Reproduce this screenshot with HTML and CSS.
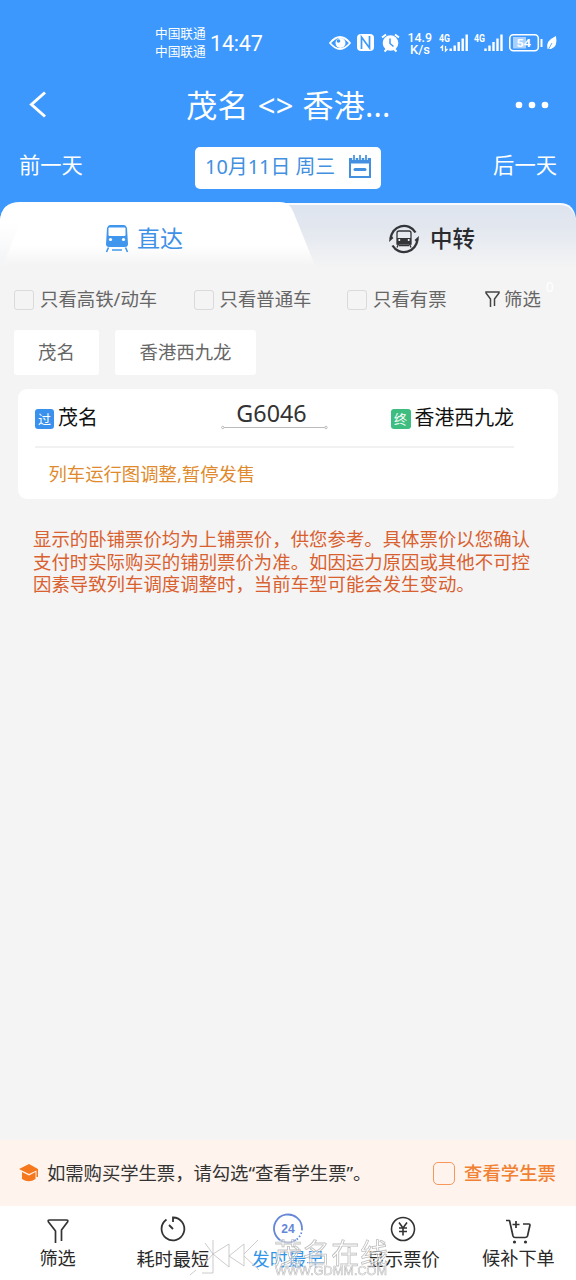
FILE: index.html
```html
<!DOCTYPE html>
<html lang="zh-CN">
<head>
<meta charset="utf-8">
<title>茂名 - 香港西九龙</title>
<link rel="stylesheet" href="styles.css">
</head>
<body>
<div class="app">
  <header class="top">
    <div class="status">
      <div class="carriers"><span>中国联通</span><span>中国联通</span></div>
      <div class="clock">14:47</div>
      <svg class="status-icons" width="232" height="32" viewBox="326 27 232 32" fill="none" stroke="#fff">
        <path d="M330 43Q340 31 350 43Q340 55 330 43Z" stroke-width="1.8"/>
        <circle cx="340.500" cy="43" r="5" fill="#fff" stroke="none"/><circle cx="338.500" cy="41" r="1.800" fill="#3c98fc" stroke="none"/>
        <rect x="357" y="34" width="17" height="17" rx="4" fill="#fff" stroke="none"/>
        <path d="M361.500 49V37L369.500 48V36" stroke="#3c98fc" stroke-width="1.700"/>
        <circle cx="390.500" cy="43" r="7.800" fill="#fff" stroke="none"/>
        <path d="M382 37.500L386 34.500M399 37.500L395 34.500M384.500 51.500L387 49M396.500 51.500L394 49" stroke-width="2"/>
        <path d="M390 38.500V43.500L393.500 46.500" stroke="#3c98fc" stroke-width="1.500"/>
        <g fill="#fff" stroke="none" class="status-text">
          <text x="407.500" y="41.500" font-size="12" font-weight="500" textLength="24.500" lengthAdjust="spacingAndGlyphs">14.9</text>
          <text x="410" y="53.500" font-size="12.500" font-weight="500" textLength="20" lengthAdjust="spacingAndGlyphs">K/s</text>
          <text x="439" y="41.500" font-size="10.500" font-weight="bold" textLength="11" lengthAdjust="spacingAndGlyphs">4G</text>
          <text x="474" y="41.500" font-size="10.500" font-weight="bold" textLength="11" lengthAdjust="spacingAndGlyphs">4G</text>
        </g>
        <path d="M442.500 51V46L440.500 48M445.500 46V51L447.500 49" stroke-width="1.300"/>
        <path d="M450.700 51V48.500M454.700 51V45.500M458.700 51V42M462.700 51V38.500M466.700 51V34.500M485.500 51V48.500M489.500 51V45.500M493.500 51V42M497.500 51V38.500M501.500 51V34.500" stroke-width="2.400"/>
        <rect x="509.800" y="34.800" width="28.500" height="16" rx="3.500" stroke-width="1.600"/>
        <rect x="513" y="37" width="13" height="11.500" fill="#a9d0fe" stroke="none"/>
        <text x="516.500" y="47" class="status-text" fill="#fff" stroke="none" font-size="11.500" font-weight="bold" textLength="14.500" lengthAdjust="spacingAndGlyphs">54</text>
        <path d="M541.500 39V47" stroke-width="2"/>
        <path d="M547.500 49Q545 41 556 36Q558 47 551 49L548 49Z" fill="#fff" stroke="none"/><path d="M547.500 51L552 43" stroke="#3c98fc" stroke-width=".8"/>
      </svg>
    </div>
    <div class="titlebar">
      <svg width="20" height="28" viewBox="0 0 20 28" fill="none" stroke="#fff" stroke-width="3"><path d="M17 1.500L3.500 13.500L17 25.500"/></svg>
      <h1 class="title">茂名 <span class="swap">&lt;&gt;</span> 香港...</h1>
      <svg width="34" height="8" viewBox="0 0 34 8" fill="#fff"><circle cx="4" cy="4" r="3.300"/><circle cx="17" cy="4" r="3.300"/><circle cx="30" cy="4" r="3.300"/></svg>
    </div>
    <div class="days">
      <span>前一天</span>
      <div class="date"><span>10月11日 周三</span>
        <svg width="24" height="26" viewBox="0 0 24 26" fill="none" stroke="#4290df"><path d="M2 5H22V23H2Z" stroke-width="2"/><path d="M1 4.500H23V9.500H1Z" fill="#4290df" stroke="none"/><path d="M6 1V6M12 1V6M18 1V6" stroke="#fff" stroke-width="3.500"/><path d="M6 1V6M12 1V6M18 1V6" stroke-width="1.700"/><path d="M7 15.500H17" stroke-width="3" stroke-linecap="round"/></svg>
      </div>
      <span class="next">后一天</span>
    </div>
  </header>
  <div class="tabs">
    <svg class="tab-shape" width="576" height="66" viewBox="0 0 576 66">
      <defs>
        <linearGradient id="gray" x1="0" y1="0" x2="0" y2="1"><stop offset="0" stop-color="#dee4ef"/><stop offset=".35" stop-color="#e2e7ef"/><stop offset="1" stop-color="#f4f4f4"/></linearGradient>
        <linearGradient id="white" x1="0" y1="0" x2="0" y2="1"><stop offset="0" stop-color="#fff"/><stop offset=".65" stop-color="#fff"/><stop offset=".97" stop-color="#f4f4f4"/></linearGradient>
        <linearGradient id="side" x1="0" y1="0" x2="0" y2="1"><stop offset="0" stop-color="#f4f5f7" stop-opacity="0"/><stop offset="1" stop-color="#f4f5f7"/></linearGradient>
      </defs>
      <path d="M0 66V18Q2 1 20 1H560Q574 1 576 17V66Z" fill="#f9fbfe"/>
      <path d="M0 66V35L14 3H560Q573 3 576 18V66Z" fill="url(#gray)"/>
      <path d="M0 66V19Q1 0 20 0H280Q289 0 293 9L316 66Z" fill="url(#white)"/>
      <path d="M0 20H20L3 64H0Z" fill="url(#side)"/>
    </svg>
    <div class="tab tab-on">
      <svg width="24" height="29" viewBox="0 0 24 29"><path d="M5 1H19Q21 1 22 4L23 20Q23 23 20 23H4Q1 23 1 20L2 4Q3 1 5 1Z" fill="#4096ec"/><rect x="3.500" y="3.500" width="17" height="8.500" rx="1" fill="#fff"/><circle cx="5.500" cy="15.500" r="1.600" fill="#fff"/><circle cx="18.500" cy="15.500" r="1.600" fill="#fff"/><path d="M3.500 23.500L1.500 28M20.500 23.500L22.500 28M7 26H17" stroke="#4096ec" stroke-width="1.600"/></svg>
      <span>直达</span>
    </div>
    <div class="tab tab-off">
      <svg width="30" height="32" viewBox="0 0 30 32" fill="none" stroke="#333539"><path d="M1.700 16A13.300 13.300 0 0 1 26.500 9.500M28.300 16A13.300 13.300 0 0 1 3.500 22.500" stroke-width="2.300"/><path d="M0 19L1 12L4.500 15ZM30 13L29 20L25.500 17Z" fill="#333539" stroke="none"/><path d="M8 10Q8 8 10 8H20Q22 8 22 10V21H8Z" stroke-width="1.300"/><path d="M8 15H22V21H8Z" fill="#333539" stroke="none"/><circle cx="10.300" cy="17" r="1" fill="#fff" stroke="none"/><circle cx="19.700" cy="17" r="1" fill="#fff" stroke="none"/><path d="M9.500 21L8 24.500M20.500 21L22 24.500M10 22.700H20" stroke-width="1.300"/></svg>
      <span>中转</span>
    </div>
  </div>
  <main class="content">
    <div class="filters">
      <label class="check"><i></i>只看高铁/动车</label>
      <label class="check"><i></i>只看普通车</label>
      <label class="check"><i></i>只看有票</label>
      <div class="sift"><svg width="15" height="17" viewBox="0 0 15 17" fill="none" stroke="#444" stroke-width="1.500"><path d="M5.500 16V8L1 2V1H14V2L9.500 8V15"/></svg>筛选<sup>0</sup></div>
    </div>
    <div class="chips"><span class="chip chip-a">茂名</span><span class="chip chip-b">香港西九龙</span></div>
    <section class="card">
      <div class="route">
        <div class="stop from"><b class="badge pass">过</b>茂名</div>
        <div class="train"><span>G6046</span><svg width="107" height="5" viewBox="0 0 107 5" fill="#fff" stroke="#bbb"><path d="M2 2.500H105"/><circle cx="1.800" cy="2.500" r="1.200"/><circle cx="105" cy="2.500" r="1.200"/></svg></div>
        <div class="stop to"><b class="badge end">终</b>香港西九龙</div>
      </div>
      <p class="halt">列车运行图调整,暂停发售</p>
    </section>
    <p class="notice">显示的卧铺票价均为上铺票价，供您参考。具体票价以您确认<br>支付时实际购买的铺别票价为准。如因运力原因或其他不可控<br>因素导致列车调度调整时，当前车型可能会发生变动。</p>
  </main>
  <div class="student">
    <svg width="20" height="20" viewBox="0 0 20 20"><path d="M0 6L10 1L19 6V14H17.500V7.500L10 11Z" fill="#f5781e"/><path d="M3 9L10 12.500L16.500 9V16Q10 20.500 3 16Z" fill="#f5781e"/></svg>
    <span class="student-text">如需购买学生票，请勾选“查看学生票”。</span>
    <i class="student-box"></i><span class="student-link">查看学生票</span>
  </div>
  <nav class="nav">
    <div class="nav-item"><svg width="32" height="34" viewBox="0 0 32 34" fill="none" stroke="#333" stroke-width="1.700" stroke-linejoin="round"><path d="M13.500 31V19L6.500 10Q5.500 8 7.500 8H24.500Q26.500 8 25.500 10L19.500 18V29"/></svg><span>筛选</span></div>
    <div class="nav-item low"><svg width="32" height="34" viewBox="0 0 32 34" fill="none" stroke="#333" stroke-width="1.800"><path d="M9.500 7.500A11.400 11.400 0 1 0 16 5.500V10M12 13L16 17"/></svg><span>耗时最短</span></div>
    <div class="nav-item low active"><svg width="32" height="34" viewBox="0 0 32 34" fill="none" stroke="#6487d7" stroke-width="1.800"><path d="M24 28A14 14 0 1 1 30 17"/><path d="M30 17A14 14 0 0 1 24 28" stroke-dasharray="1.500 2"/><text class="num" x="16" y="21" text-anchor="middle" fill="#6487d7" stroke="none">24</text></svg><span>发时最早</span></div>
    <div class="nav-item low"><svg width="32" height="34" viewBox="0 0 32 34" fill="none" stroke="#333" stroke-width="1.600"><circle cx="16" cy="17" r="11.500"/><path d="M12 10.500L16 16L20 10.500M12 16H20M12 19.500H20M16 16V23.500"/></svg><span>显示票价</span></div>
    <div class="nav-item"><svg width="32" height="34" viewBox="0 0 32 34" fill="none" stroke="#333" stroke-width="1.700" stroke-linejoin="round"><path d="M4 8.500H7.500L11 24Q11.500 25.500 13 25.500H23Q25 25.500 25.500 24L28 13Q28 12 27 12H21M14 9V16M10.500 12.500H17.500"/><circle cx="12.500" cy="30" r="1.600" fill="#333" stroke="none"/><circle cx="23.500" cy="30" r="1.600" fill="#333" stroke="none"/></svg><span>候补下单</span></div>
    <svg class="watermark" width="204" height="44" viewBox="188 1236 204 44">
      <g class="emboss" fill="none">
        <path class="mark" d="M213 1240V1273H202M213 1254L229 1244V1267L213 1254M229 1256L244 1244V1266L229 1256M244 1254L258 1240M244 1256L259 1270M190 1275L196 1270M205 1243L213 1254L206 1262"/>
        <text x="274" y="1264" font-size="28" textLength="114">茂名在线</text>
      </g>
      <text class="emboss url" x="275" y="1275" font-size="12" textLength="112" lengthAdjust="spacingAndGlyphs">WWW.GDMM.COM</text>
    </svg>
  </nav>
</div>
</body>
</html>
```
FILE: styles.css
```css
* { box-sizing: border-box; }
body { margin: 0; background: #f4f4f4; font-family: "Noto Sans", "Noto Sans CJK SC", sans-serif; }
.app { width: 576px; height: 1280px; display: flex; flex-direction: column; overflow: hidden; white-space: nowrap; }
svg { display: block; flex: none; }
.top { height: 202px; background: #3c98fc; color: #fff; }
.status { height: 75px; display: flex; align-items: flex-start; padding: 25px 18px 0 155px; }
.carriers { display: flex; flex-direction: column; width: 55px; font-size: 12.7px; line-height: 17.5px; }
.clock { font-family: Roboto, sans-serif; font-size: 21.5px; line-height: 37px; width: 116px; letter-spacing: -.2px; }
.status-icons { margin-top: 2px; }
.status-text { font-family: Roboto, sans-serif; }
.titlebar { height: 60px; display: flex; align-items: center; justify-content: space-between; padding: 0 27px 0 28px; }
.title { margin: 0; font-size: 31px; font-weight: 400; line-height: 56px; padding-left: 14px; letter-spacing: .25px; }
.swap { margin: 0 .5px; }
.days { display: grid; grid-template-columns: 176px 186px 176px; height: 54px; padding: 12px 19px 0; font-size: 21.3px; line-height: 36px; }
.next { text-align: right; }
.date { display: flex; justify-content: space-between; height: 42px; padding: 0 9px 0 10px; background: #fff; border-radius: 5px; color: #4290df; font-size: 19.9px; line-height: 39px; }
.date svg { margin-top: 7px; }
.tabs { position: relative; height: 66px; display: grid; grid-template-columns: 288px 288px; background: #3c98fc; }
.tab-shape { position: absolute; inset: 0; }
.tab { position: relative; display: flex; align-items: center; justify-content: center; height: 72px; font-size: 23px; line-height: 32px; }
.tab-on { color: #3f91e8; gap: 8px; }
.tab-off { color: #292b2f; gap: 11px; font-size: 22.5px; font-weight: 500; padding-top: 2px; }
.content { flex: 1; }
.filters { display: grid; grid-template-columns: 179.5px 153.5px 138px 1fr; padding: 14px 0 0 14px; height: 62px; font-size: 18.4px; line-height: 34px; color: #666; }
.check { display: flex; align-items: center; gap: 6px; height: 34px; }
.check i { width: 20px; height: 20px; border: 1.5px solid #dadada; border-radius: 3px; margin-top: 2px; }
.sift { display: flex; align-items: center; gap: 4px; height: 34px; }
.sift sup { color: #fff; font-size: 14px; line-height: 20px; align-self: flex-start; margin: -5px 0 0 1px; }
.chips { display: flex; gap: 16px; padding-left: 14px; height: 59px; }
.chip { display: block; height: 45px; background: #fff; border-radius: 3px; text-align: center; font-size: 18.4px; line-height: 43px; color: #666; }
.chip-a { width: 85px; }
.chip-b { width: 141px; }
.card { width: 540px; height: 110px; margin-left: 18px; padding: 0 44px 0 17px; background: #fff; border-radius: 9px; }
.route { display: grid; grid-template-columns: 186px 107px 1fr; height: 59px; border-bottom: 2px solid #f1f1f1; padding-top: 8px; }
.stop { display: flex; gap: 4px; height: 42px; font-size: 19.9px; line-height: 42px; color: #111; }
.to { justify-content: flex-end; }
.badge { width: 19px; height: 20px; margin-top: 12px; border-radius: 3px; color: #fff; font-size: 13px; font-weight: 400; line-height: 20px; text-align: center; }
.pass { background: #3991ed; }
.end { width: 20px; background: #3dbd80; }
.train { display: flex; flex-direction: column; align-items: center; font-size: 23.3px; line-height: 32px; color: #333; }
.train span { margin-left: -6px; }
.train svg { margin-top: -4px; }
.halt { margin: 0; padding-left: 13.5px; font-size: 18.35px; line-height: 51px; color: #df8b2d; }
.notice { margin: 29px 0 0 33px; font-size: 18.42px; line-height: 22.7px; color: #d9602f; }
.student { height: 66px; display: flex; align-items: center; padding: 0 20px 0 19px; background: #fff3ed; font-size: 18.4px; line-height: 60px; color: #333; }
.student-text { margin-left: 8px; width: 387px; letter-spacing: -.08px; }
.student-box { width: 22px; height: 23px; border: 1.8px solid #f4985c; border-radius: 5px; flex: none; }
.student-link { margin-left: 9px; color: #f08132; font-weight: 500; }
.nav { position: relative; height: 74px; display: grid; grid-template-columns: repeat(5, 1fr); background: #fff; }
.nav-item { display: flex; flex-direction: column; align-items: center; padding-top: 6px; font-size: 18.2px; line-height: 24px; color: #292929; }
.nav-item span { margin-top: 0; }
.low span { margin-top: 1px; }
.active { color: #3295e8; }
.num { font: bold 12px "Liberation Sans", sans-serif; }
.watermark { position: absolute; left: 188px; top: 30px; opacity: .85; }
.emboss { stroke: #b4b4b4; stroke-width: .8px; fill: rgba(255,255,255,.3); filter: drop-shadow(-1px -1px 0 #fff); }
.mark { fill: none; }
.url { font-family: "Liberation Sans", sans-serif; stroke-width: .6px; }
```
